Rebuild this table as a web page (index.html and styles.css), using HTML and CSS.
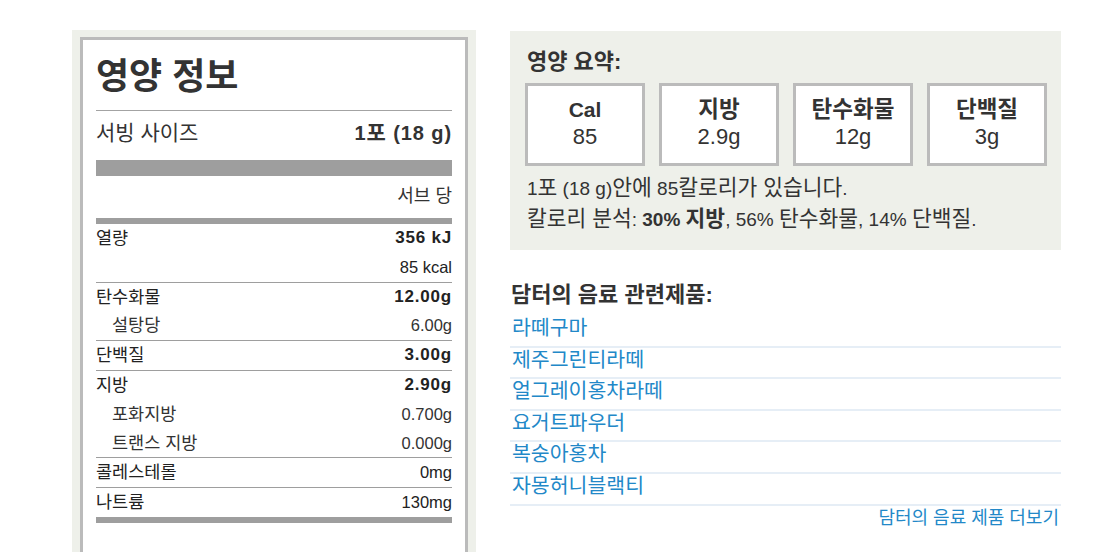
FILE: index.html
```html
<!DOCTYPE html>
<html lang="ko">
<head>
<meta charset="utf-8">
<title>영양 정보</title>
<link rel="stylesheet" href="styles.css">
</head>
<body>
<div class="page">
  <div class="label-wrap">
    <div class="label">
      <h1 class="label-title">영양 정보</h1>
      <div class="serving">
        <span>서빙 사이즈</span>
        <span class="serving-val">1<span class="ko">포</span> (18 g)</span>
      </div>
      <div class="bar-thick"></div>
      <div class="per"><span>서브 당</span></div>
      <div class="bar-mid"></div>
      <div class="group">
        <div class="row"><span>열량</span><span class="v-bold">356 kJ</span></div>
        <div class="row"><span></span><span class="v">85 kcal</span></div>
      </div>
      <div class="group">
        <div class="row"><span>탄수화물</span><span class="v-bold">12.00g</span></div>
        <div class="row sub"><span>설탕당</span><span class="v">6.00g</span></div>
      </div>
      <div class="group">
        <div class="row"><span>단백질</span><span class="v-bold">3.00g</span></div>
      </div>
      <div class="group">
        <div class="row"><span>지방</span><span class="v-bold">2.90g</span></div>
        <div class="row sub"><span>포화지방</span><span class="v">0.700g</span></div>
        <div class="row sub"><span>트랜스 지방</span><span class="v">0.000g</span></div>
      </div>
      <div class="group">
        <div class="row"><span>콜레스테롤</span><span class="v">0mg</span></div>
      </div>
      <div class="group">
        <div class="row"><span>나트륨</span><span class="v">130mg</span></div>
      </div>
      <div class="bar-mid"></div>
    </div>
  </div>
  <div class="side">
    <div class="summary">
      <h2 class="summary-title">영양 요약:</h2>
      <div class="boxes">
        <div class="box"><div class="box-k latin">Cal</div><div class="box-v">85</div></div>
        <div class="box"><div class="box-k">지방</div><div class="box-v">2.9g</div></div>
        <div class="box"><div class="box-k">탄수화물</div><div class="box-v">12g</div></div>
        <div class="box"><div class="box-k">단백질</div><div class="box-v">3g</div></div>
      </div>
      <p class="summary-line first">1<span class="ko">포</span> (18 g)<span class="ko">안에</span> 85<span class="ko">칼로리가 있습니다</span>.</p>
      <p class="summary-line"><span class="ko">칼로리 분석</span>: <b>30% <span class="ko">지방</span></b>, 56% <span class="ko">탄수화물</span>, 14% <span class="ko">단백질</span>.</p>
    </div>
    <div class="related">
      <h2 class="related-title">담터의 음료 관련제품:</h2>
      <ul class="links">
        <li><a href="#">라떼구마</a></li>
        <li><a href="#">제주그린티라떼</a></li>
        <li><a href="#">얼그레이홍차라떼</a></li>
        <li><a href="#">요거트파우더</a></li>
        <li><a href="#">복숭아홍차</a></li>
        <li><a href="#">자몽허니블랙티</a></li>
      </ul>
      <div class="more"><a href="#">담터의 음료 제품 더보기</a></div>
    </div>
  </div>
</div>
</body>
</html>
```

FILE: styles.css
```css
html, body {
  margin: 0;
  padding: 0;
  height: 552px;
  overflow: hidden;
  background: #ffffff;
}
body {
  font-family: "Liberation Sans", "Noto Sans CJK KR", Arial, sans-serif;
  color: #333333;
}
.page {
  display: flex;
  align-items: flex-start;
  padding: 30px 0 0 72px;
}
.label-wrap {
  width: 404px;
  box-sizing: border-box;
  background: #eef0ea;
  padding: 7px 8px 0 8px;
  height: 560px;
}
.label {
  background: #ffffff;
  border: 3px solid #bbbbbb;
  padding: 0 13px;
  height: 600px;
}
.label-title {
  margin: 0;
  padding-top: 17px;
  font-size: 36px;
  line-height: 40px;
  font-weight: bold;
  color: #333333;
  padding-bottom: 13px;
  border-bottom: 1px solid #a3a3a3;
}
.serving {
  display: flex;
  justify-content: space-between;
  font-size: 21px;
  line-height: 26px;
  padding-top: 9px;
  color: #333333;
}
.serving-val {
  font-size: 20px;
  font-weight: bold;
  letter-spacing: 0.9px;
}
.serving-val .ko {
  font-size: 1.05em;
}
.bar-thick {
  margin-top: 14px;
  height: 16px;
  background: #9e9e9e;
}
.per {
  display: flex;
  justify-content: flex-end;
  font-size: 18px;
  line-height: 22px;
  padding-top: 9px;
  height: 42px;
  box-sizing: border-box;
}
.bar-mid {
  height: 6px;
  background: #9e9e9e;
}
.group + .group {
  border-top: 1px solid #9e9e9e;
}
.row {
  display: flex;
  justify-content: space-between;
  font-size: 17.5px;
  line-height: 28.8px;
  color: #222222;
}
.row.sub {
  padding-left: 16px;
  color: #333333;
}
.v {
  font-size: 16.5px;
}
.v-bold {
  font-size: 17px;
  font-weight: bold;
  letter-spacing: 0.8px;
  color: #222222;
}
.side {
  margin-left: 34px;
  width: 551px;
  padding-top: 1px;
}
.summary {
  background: #eef0ea;
  padding: 19px 14px 15px 15px;
}
.summary-title {
  margin: 0 0 9px 2px;
  font-size: 22px;
  line-height: 24px;
  font-weight: bold;
  color: #333333;
}
.boxes {
  display: grid;
  grid-template-columns: repeat(4, 120px);
  column-gap: 14px;
}
.box {
  background: #ffffff;
  border: 3px solid #bbbbbb;
  text-align: center;
  padding: 10px 0 13px;
  height: 83px;
  box-sizing: border-box;
}
.box-k {
  font-size: 22.5px;
  line-height: 27px;
  font-weight: bold;
  color: #333333;
}
.box-k.latin {
  font-size: 21px;
}
.box-v {
  font-size: 22px;
  line-height: 27px;
  color: #333333;
}
.summary-line {
  margin: 0 0 0 2px;
  font-size: 19px;
  line-height: 31px;
  color: #333333;
}
.summary-line .ko {
  font-size: 1.13em;
  line-height: 1;
}
.summary-line.first {
  margin-top: 7px;
}
.summary-line b {
  font-weight: bold;
}
.related-title {
  margin: 32px 0 8px 1px;
  font-size: 22px;
  line-height: 26px;
  font-weight: bold;
  color: #333333;
}
.links {
  list-style: none;
  margin: 0;
  padding: 0;
}
.links li {
  line-height: 24px;
  padding-bottom: 5.6px;
  border-bottom: 2px solid #e6eef6;
  font-size: 20.5px;
  padding-left: 2px;
}
.links a, .more a {
  color: #2288c8;
  text-decoration: none;
}
.more {
  text-align: right;
  font-size: 18px;
  line-height: 24px;
  padding-right: 2px;
}
```
